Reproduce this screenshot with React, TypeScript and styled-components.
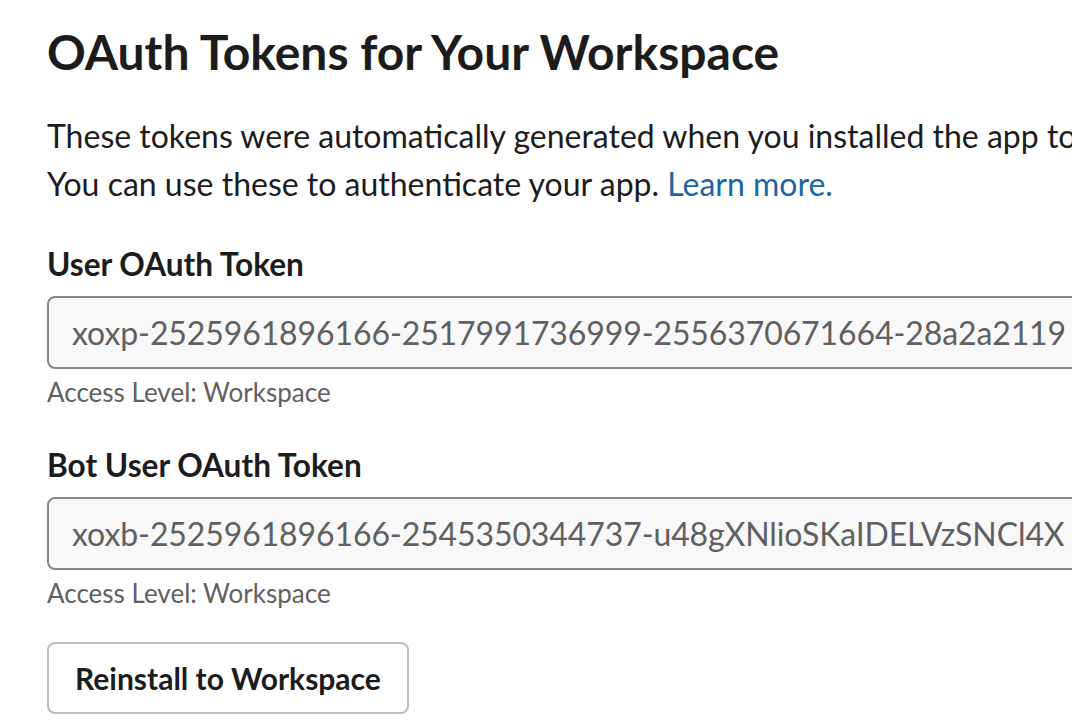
import React from "react";
import styled, { createGlobalStyle } from "styled-components";

const Global = createGlobalStyle`
  html, body { margin: 0; padding: 0; background: #ffffff; }
  body { font-family: Lato, "Noto Sans", sans-serif; color: #1d1c1d; overflow: hidden; }
`;

const Page = styled.div`
  width: 1072px;
  height: 728px;
  overflow: hidden;
  padding: 23px 0 0 47px;
  box-sizing: border-box;
`;

const Section = styled.section`
  width: 1400px;
  display: flex;
  flex-direction: column;
  align-items: flex-start;
`;

const Title = styled.h2`
  margin: 0;
  font-size: 48px;
  line-height: 58px;
  font-weight: 700;
  color: #1d1c1d;
  white-space: nowrap;
`;

const Intro = styled.p`
  margin: 31px 0 0;
  font-size: 32px;
  line-height: 48px;
  color: #1d1c1d;
  white-space: nowrap;
`;

const Link = styled.a`
  color: #1d64a4;
  text-decoration: none;
`;

const Field = styled.div<{ $first?: boolean }>`
  display: flex;
  flex-direction: column;
  align-items: flex-start;
  margin-top: ${(p) => (p.$first ? "38px" : "40px")};
`;

const Label = styled.label`
  font-size: 31.6px;
  line-height: 36px;
  font-weight: 700;
  color: #1d1c1d;
  white-space: nowrap;
`;

const TokenBox = styled.div`
  margin-top: 14px;
  width: 1200px;
  height: 73px;
  box-sizing: border-box;
  border: 2px solid #868686;
  border-radius: 8px;
  background: #f8f8f8;
  display: flex;
  align-items: center;
  padding: 0 23px;
  font-size: 32px;
  letter-spacing: -0.1px;
  color: #616061;
  white-space: nowrap;
  overflow: hidden;
`;

const Caption = styled.div`
  margin-top: 8px;
  font-size: 26px;
  line-height: 30px;
  color: #616061;
  white-space: nowrap;
`;

const Button = styled.button`
  margin-top: 34px;
  height: 72px;
  padding: 0 26px;
  box-sizing: border-box;
  border: 2px solid #bcbcbc;
  border-radius: 8px;
  background: #ffffff;
  font-family: Lato, "Noto Sans", sans-serif;
  font-size: 30px;
  font-weight: 700;
  color: #1d1c1d;
  white-space: nowrap;
`;

const tokens = [
  {
    label: "User OAuth Token",
    value: "xoxp-2525961896166-2517991736999-2556370671664-28a2a2119",
  },
  {
    label: "Bot User OAuth Token",
    value: "xoxb-2525961896166-2545350344737-u48gXNlioSKaIDELVzSNCl4X",
  },
];

export default function App() {
  return (
    <>
      <Global />
      <Page>
        <Section>
          <Title>OAuth Tokens for Your Workspace</Title>
          <Intro>
            These tokens were automatically generated when you installed the app to your team.
            <br />
            You can use these to authenticate your app. <Link href="#">Learn more.</Link>
          </Intro>
          {tokens.map((t, i) => (
            <Field key={t.label} $first={i === 0}>
              <Label>{t.label}</Label>
              <TokenBox>{t.value}</TokenBox>
              <Caption>Access Level: Workspace</Caption>
            </Field>
          ))}
          <Button>Reinstall to Workspace</Button>
        </Section>
      </Page>
    </>
  );
}
